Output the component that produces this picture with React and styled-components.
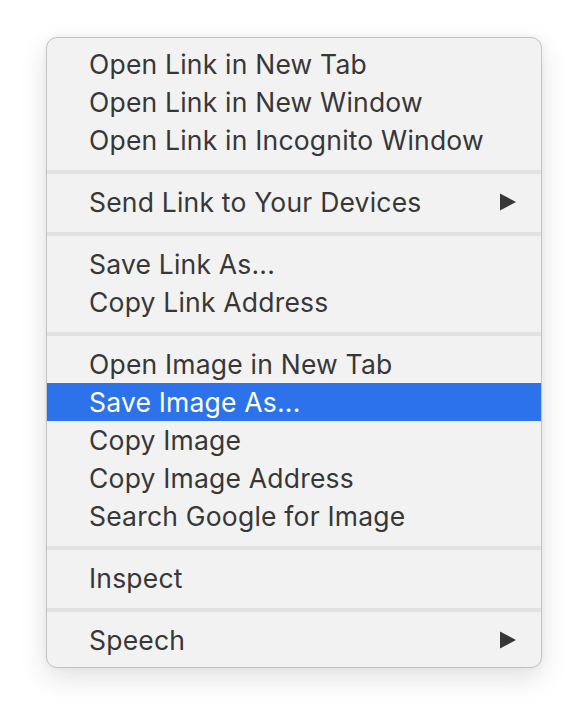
import React from "react";
import styled, { createGlobalStyle } from "styled-components";

const GlobalStyle = createGlobalStyle`
  html, body {
    margin: 0;
    padding: 0;
    background: #ffffff;
  }
  * {
    box-sizing: border-box;
  }
`;

const groups = [
  ["Open Link in New Tab", "Open Link in New Window", "Open Link in Incognito Window"],
  [{ label: "Send Link to Your Devices", submenu: true }],
  ["Save Link As...", "Copy Link Address"],
  [
    "Open Image in New Tab",
    { label: "Save Image As...", active: true },
    "Copy Image",
    "Copy Image Address",
    "Search Google for Image",
  ],
  ["Inspect"],
  [{ label: "Speech", submenu: true }],
];

function ContextMenu() {
  return (
    <Page>
      <Menu>
        {groups.map((group, gi) => (
          <React.Fragment key={gi}>
            {gi > 0 && <Separator />}
            {group.map((entry) => {
              const item = typeof entry === "string" ? { label: entry } : entry;
              return (
                <Item key={item.label} $active={item.active}>
                  <span>{item.label}</span>
                  {item.submenu && (
                    <Arrow viewBox="0 0 18 18">
                      <path d="M1 0.5 L17 9 L1 17.5 Z" fill="currentColor" />
                    </Arrow>
                  )}
                </Item>
              );
            })}
          </React.Fragment>
        ))}
      </Menu>
    </Page>
  );
}

const Page = styled.div`
  padding: 37px 0 0 46px;
  width: 588px;
  height: 722px;
`;

const Menu = styled.div`
  width: 496px;
  background-color: #f2f2f2;
  border: 1px solid #c4c4c4;
  border-radius: 11px;
  padding: 7px 0 8px;
  box-shadow: 0 10px 28px rgba(0, 0, 0, 0.12), 0 0 6px rgba(0, 0, 0, 0.05);
  font-family: Inter, "Liberation Sans", sans-serif;
`;

const Item = styled.div`
  height: 38px;
  display: flex;
  align-items: center;
  justify-content: space-between;
  padding: 0 24px 0 42px;
  font-size: 26.5px;
  letter-spacing: 0.2px;
  color: ${(p) => (p.$active ? "#ffffff" : "#373737")};
  background-color: ${(p) => (p.$active ? "#2b72eb" : "transparent")};
`;

const Arrow = styled.svg`
  width: 18px;
  height: 18px;
  color: #373737;
`;

const Separator = styled.div`
  height: 4px;
  margin: 11px 0 9px;
  background-color: #e2e2e2;
`;

export default function App() {
  return (
    <>
      <GlobalStyle />
      <ContextMenu />
    </>
  );
}
